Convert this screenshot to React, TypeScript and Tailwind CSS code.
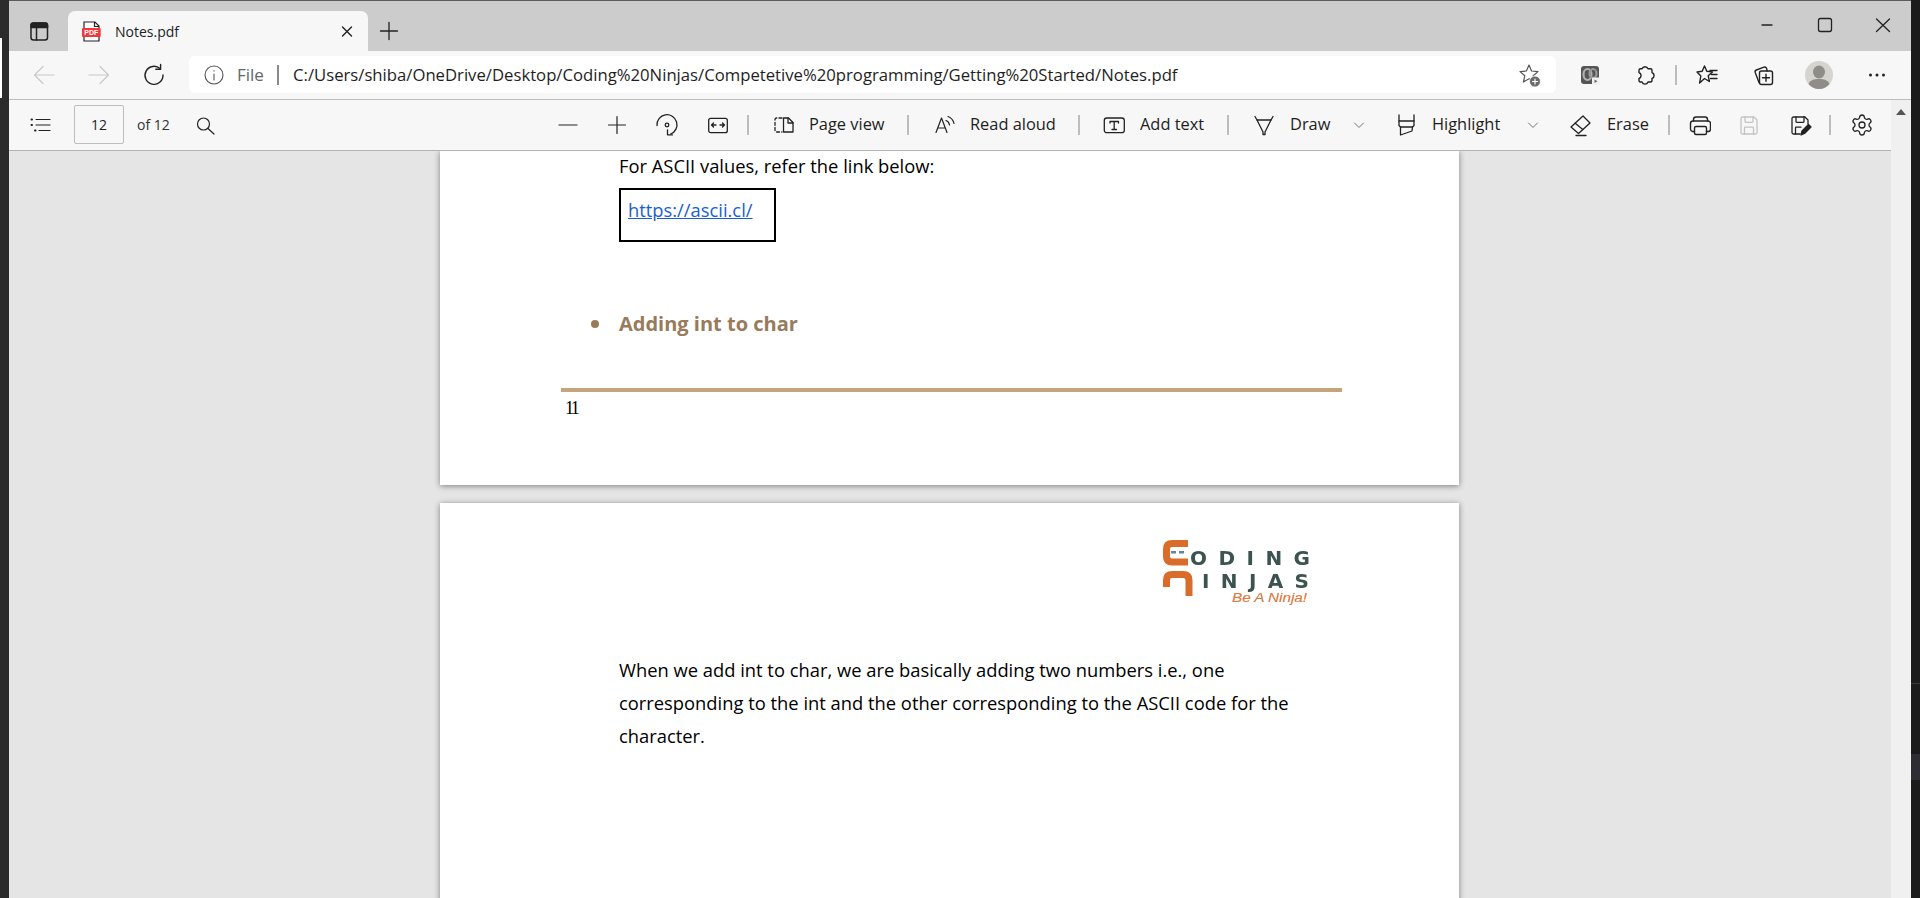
import React from "react";
import { Settings } from "lucide-react";

type IP = { children: React.ReactNode; className?: string; sw?: number; color?: string };
function I({ children, className = "", sw = 1.3, color = "#222" }: IP) {
  return (
    <svg viewBox="0 0 24 24" width="24" height="24" fill="none" stroke={color} strokeWidth={sw} strokeLinecap="round" strokeLinejoin="round" className={"shrink-0 " + className}>
      {children}
    </svg>
  );
}
const Sep = ({ className = "" }: { className?: string }) => <div className={"w-[2px] h-[20px] shrink-0 bg-[#bdbdbd] " + className} />;
const L = ({ children, className = "" }: { children: React.ReactNode; className?: string }) => (
  <span className={"shrink-0 whitespace-nowrap text-[16.4px] text-[#1e1e1e] " + className}>{children}</span>
);
const Chevron = ({ className = "" }: { className?: string }) => (
  <I className={className} color="#777" sw={1}><path d="M7.5 10 12 14.5 16.5 10" /></I>
);
const SaveShape = () => (
  <>
    <path d="M6 4h11l3 3v12.5a1.5 1.5 0 0 1-1.5 1.5h-13A1.5 1.5 0 0 1 4 19.5v-14A1.5 1.5 0 0 1 5.5 4z" />
    <path d="M8 4v4.5a.8.8 0 0 0 .8.8h6.4a.8.8 0 0 0 .8-.8V4" />
    <path d="M7.5 21v-6a.8.8 0 0 1 .8-.8h7.4a.8.8 0 0 1 .8.8v6" />
  </>
);

function Logo() {
  const f = "'Liberation Sans',sans-serif";
  const d = "'DejaVu Sans',sans-serif";
  return (
    <svg viewBox="0 0 152 70" width="152" height="70" className="blur-[0.5px]">
      <path d="M28 6.500H12Q6.500 6.500 6.500 12V19.500Q6.500 25 12 25H28" fill="none" stroke="#d96c2b" strokeWidth="7" />
      <rect x="11" y="14" width="5" height="2.500" fill="#5d8a94" />
      <rect x="19" y="14" width="5" height="2.500" fill="#5d8a94" />
      <text x="30" y="28" fontFamily={d} fontWeight="700" fontSize="20" fill="#3c5350" textLength="120" lengthAdjust="spacing">ODING</text>
      <path d="M6.500 50V43Q6.500 37.500 12 37.500H23Q29 37.500 29 43V59" fill="none" stroke="#d96c2b" strokeWidth="7" />
      <text x="42" y="51" fontFamily={d} fontWeight="700" fontSize="20" fill="#3c5350" textLength="107" lengthAdjust="spacing">INJAS</text>
      <text x="72" y="65" fontFamily={f} fontStyle="italic" fontSize="13" fill="#dd7c45" stroke="#dd7c45" strokeWidth="0.2" textLength="75" lengthAdjust="spacingAndGlyphs">Be A Ninja!</text>
    </svg>
  );
}

export default function App() {
  return (
    <div className="flex w-[1920px] h-[898px] overflow-hidden bg-[#2b2b2b] font-['Open_Sans',sans-serif]">
      {/* desktop strip left */}
      <div className="w-[9px] shrink-0 bg-[#2b2b2b] flex flex-col">
        <div className="h-[38px]" />
        <div className="w-[2px] h-[60px] bg-white" />
      </div>

      <div className="w-[1902px] shrink-0 flex flex-col">
        {/* tabs */}
        <div className="h-[51px] shrink-0 bg-[#cccccc] border-t border-[#5c5c5c] flex items-end">
          <div className="h-[40px] flex items-center ml-[18px]">
            <I sw={1.5}>
              <rect x="4" y="4" width="16.5" height="17" rx="2.5" />
              <path d="M4 8.5V6.5A2.5 2.5 0 0 1 6.5 4h11.5a2.5 2.5 0 0 1 2.5 2.5v2z" fill="#222" />
              <path d="M9.5 8.5V21" />
            </I>
          </div>
          <div className="ml-[17px] w-[300px] h-[40px] rounded-t-[7px] bg-[#f7f7f7] flex items-center pl-[12px] pr-[9px]">
            <svg viewBox="0 0 24 24" width="24" height="24" className="shrink-0">
              <path d="M4 3h11l4 4v15H4z" fill="#fff" stroke="#222" strokeWidth="1.2" />
              <path d="M14.5 3v4.5H19" fill="none" stroke="#222" strokeWidth="1.2" />
              <rect x="2" y="9" width="18.7" height="9" rx="1" fill="#f0383f" />
              <text x="11.3" y="16" textAnchor="middle" fontSize="7" fontWeight="700" fontFamily="'Liberation Sans',sans-serif" fill="#fff">PDF</text>
            </svg>
            <span className="ml-[11px] flex-1 text-[14px] text-[#1e1e1e] whitespace-nowrap">Notes.pdf</span>
            <I sw={1.4}><path d="M7.5 8 16.5 17M16.5 8 7.5 17" /></I>
          </div>
          <div className="h-[40px] flex items-center ml-[9px]">
            <I><path d="M12 3.5V20.5M3.5 12H20.5" /></I>
          </div>
          <div className="self-start mt-[12px] ml-auto pr-[16px] flex gap-[34px]">
            <I><path d="M7 12H17" /></I>
            <I><rect x="5.5" y="5.5" width="13" height="13" rx="2" /></I>
            <I><path d="M5.5 6 18.5 18.5M18.5 6 5.5 18.5" /></I>
          </div>
        </div>

        {/* address bar row */}
        <div className="h-[49px] shrink-0 bg-[#f7f7f7] border-b border-[#bdbdbd] flex items-center pb-[1px]">
          <I className="ml-[23px]" color="#c9c9c9" sw={1.2}><path d="M22 12H2.5M11 3.5 2.5 12 11 20.5" /></I>
          <I className="ml-[31px]" color="#c9c9c9" sw={1.2}><path d="M2 12H21.5M13 3.5 21.5 12 13 20.5" /></I>
          <I className="ml-[31px]" sw={1.4}>
            <path d="M18.2 5.8A9 9 0 1 0 21 12" />
            <path d="M18.6 1.5V6.2H13.8" />
          </I>
          <div className="ml-[23px] w-[1367px] h-[37px] shrink-0 bg-white rounded-[6px] flex items-center pl-[13px] pr-[14px]">
            <I color="#555" sw={1.1}>
              <circle cx="12" cy="12" r="9" />
              <path d="M12 11V17M12 7.500V8.100" />
            </I>
            <span className="ml-[11px] w-[40px] shrink-0 text-[17px] text-[#666]">File</span>
            <div className="w-[2px] h-[20px] shrink-0 bg-[#8a8a8a]" />
            <span className="ml-[14px] text-[16.7px] text-[#1e1e1e] whitespace-nowrap">C:/Users/shiba/OneDrive/Desktop/Coding%20Ninjas/Competetive%20programming/Getting%20Started/Notes.pdf</span>
            <I className="ml-auto" color="#555" sw={1.2}>
              <path d="M11 2 13.600 8 20 8.600 15.200 12.800 16.600 19 11 15.800 5.400 19 6.800 12.800 2 8.600 8.400 8z" />
              <circle cx="17" cy="18.500" r="5.500" fill="#6b6b6b" stroke="#fff" strokeWidth="0.8" />
              <path d="M17 16V21M14.500 18.500H19.500" stroke="#fff" />
            </I>
          </div>
          <svg viewBox="0 0 24 24" width="24" height="24" className="ml-[22px] shrink-0">
            <rect x="3" y="3" width="18" height="18" rx="3" fill="#555" />
            <ellipse cx="9.500" cy="11.500" rx="4" ry="5.500" fill="none" stroke="#b0b0b0" strokeWidth="2.200" />
            <ellipse cx="15" cy="10.500" rx="3.500" ry="4.500" fill="none" stroke="#999" strokeWidth="2.200" />
            <rect x="14" y="14.500" width="8" height="7.500" rx="1" fill="#f2f2f2" />
            <path d="M16.500 16.500 19.500 18.200 16.500 20z" fill="#666" />
          </svg>
          <I className="ml-[31px]" sw={1.4}>
            <path d="M9 5.800a3.200 3.200 0 0 1 6 0h2.500a1.500 1.500 0 0 1 1.500 1.500V9.500a3.200 3.200 0 0 1 0 6v2a1.500 1.500 0 0 1-1.500 1.500H15a3.200 3.200 0 0 1-6 0H7.500A1.500 1.500 0 0 1 6 17.500v-2a3.200 3.200 0 0 0 0-6V7.300A1.500 1.500 0 0 1 7.500 5.800z" />
          </I>
          <Sep className="ml-[18px]" />
          <I className="ml-[18px]" sw={1.4}>
            <path d="M9.500 3 11.800 8.300 17.500 8.900 13.200 12.700 14.400 18.500 9.500 15.500 4.600 20 5.800 13 2 9 7.200 8.300z" />
            <path d="M15 7.500H22M16.500 11.500H22M15.500 15.500H22" />
          </I>
          <I className="ml-[32px]" sw={1.4}>
            <path d="M8 19.5 4.2 9.5A2 2 0 0 1 5.4 7L13 4.2A2 2 0 0 1 15.6 5.4L16.2 8" />
            <rect x="8.5" y="8" width="13" height="13.5" rx="2" />
            <path d="M15 11.2V18.2M11.5 14.8H18.5" />
          </I>
          <svg viewBox="0 0 28 28" width="28" height="28" className="ml-[30px] shrink-0">
            <circle cx="14" cy="14" r="14" fill="#d6d4cf" />
            <ellipse cx="14" cy="11" rx="6" ry="6.5" fill="#8f8d88" />
            <path d="M3.5 23C5 19 9 18 14 18S23 19 24.5 23A14 14 0 0 1 14 28 14 14 0 0 1 3.5 23z" fill="#8f8d88" />
          </svg>
          <svg viewBox="0 0 24 24" width="24" height="24" className="ml-[32px] shrink-0" fill="#222">
            <circle cx="5.500" cy="12" r="1.500" /><circle cx="12" cy="12" r="1.500" /><circle cx="18.500" cy="12" r="1.500" />
          </svg>
        </div>

        {/* pdf viewer */}
        <div className="flex-1 min-h-0 flex">
          <div className="w-[1882px] shrink-0 flex flex-col min-h-0">
            <div className="h-[51px] shrink-0 bg-[#f7f7f7] border-b border-[#b3b3b3] flex items-center pb-[1px]">
              <I className="ml-[19px]" sw={1.2}>
                <path d="M8 6.5H22M8 12H22M11 17.5H22" />
                <path d="M3.5 6.5H4M3.5 12H4M7 17.5H7.5" strokeWidth="2" />
              </I>
              <div className="ml-[22px] w-[50px] h-[39px] shrink-0 rounded-[2px] border border-[#bdbdbd] flex items-center justify-center">
                <span className="text-[14px] text-[#1e1e1e]">12</span>
              </div>
              <span className="ml-[13px] w-[40px] shrink-0 text-[14px] text-[#333] whitespace-nowrap">of 12</span>
              <I className="ml-[16px]" sw={1.2}>
                <circle cx="10.5" cy="11" r="6" />
                <path d="M15 15.5 21 21" />
              </I>
              <I className="ml-[339px]" sw={1.2}><path d="M3 12H21" /></I>
              <I className="ml-[25px]" sw={1.2}><path d="M12 3.5V20.5M3.5 12H20.5" /></I>
              <I className="ml-[26px]" sw={1.3}>
                <path d="M2 12.5A10 10 0 1 1 15.7 21" />
                <circle cx="12" cy="12" r="1.8" />
                <path d="M12.5 17V21.8H17.5" />
              </I>
              <I className="ml-[27px]" sw={1.3}>
                <rect x="2.7" y="5.3" width="18.6" height="14.4" rx="2" />
                <path d="M5.5 12H10M7.5 10 5.5 12 7.5 14M14 12H18.5M16.5 10 18.5 12 16.5 14" />
              </I>
              <Sep className="ml-[17px]" />
              <I className="ml-[23px]" sw={1.3}>
                <path d="M10 5H4.5A1.5 1.5 0 0 0 3 6.5V17.5A1.5 1.5 0 0 0 4.500 19H10" strokeDasharray="3 2.2" />
                <path d="M11.500 5H16.500L21 9.500V19H11.500z" />
                <path d="M16 5V10H21" />
              </I>
              <L className="ml-[13px] w-[77px]">Page view</L>
              <Sep className="ml-[21px]" />
              <I className="ml-[23px]" sw={1.2}>
                <path d="M4 19.5 9.500 5 15 19.500M6 15H13" />
                <path d="M14 7.500Q17 8.500 17.500 12M16 3.500Q21 5.500 22 10.500" />
              </I>
              <L className="ml-[14px] w-[85px]">Read aloud</L>
              <Sep className="ml-[23px]" />
              <I className="ml-[22px]" sw={1.3}>
                <rect x="2.300" y="5" width="20" height="14.700" rx="2.500" />
                <path d="M8 10V8.500H16.500V10M12.200 8.500V16.500M10 16.500H14.500" />
              </I>
              <L className="ml-[14px] w-[65px]">Add text</L>
              <Sep className="ml-[22px]" />
              <I className="ml-[23px]" sw={1.3}>
                <path d="M3 3.500 5 7H19L21 3.500" />
                <path d="M5 7 11 19V21.500H13V19L19 7" />
              </I>
              <L className="ml-[14px] w-[39px]">Draw</L>
              <Chevron className="ml-[18px]" />
              <I className="ml-[23px]" sw={1.3}>
                <path d="M5 2V8H20V2" />
                <path d="M5 8V12.500L6.500 14H18.500L20 12.500V8" />
                <path d="M6.500 14V22L18 18 18.500 14" />
              </I>
              <L className="ml-[14px] w-[71px]">Highlight</L>
              <Chevron className="ml-[18px]" />
              <I className="ml-[23px]" sw={1.3}>
                <path d="M3 14 15 3 22 10 10.500 20.500z" />
                <path d="M7.200 10.200 14.800 16.500" />
                <path d="M8 22.500H18" />
              </I>
              <L className="ml-[15px] w-[39px]">Erase</L>
              <Sep className="ml-[22px]" />
              <I className="ml-[17px]" sw={1.4}>
                <path d="M6.500 8V6.500A2.500 2.500 0 0 1 9 4H18A2.500 2.500 0 0 1 20.500 6.500V8" />
                <path d="M7.500 18.500H5.500A2.500 2.500 0 0 1 3.500 16V10.500A2.500 2.500 0 0 1 6 8H21A2.500 2.500 0 0 1 23.500 10.500V16A2.500 2.500 0 0 1 21.500 18.500H19.500" />
                <rect x="7.500" y="13.500" width="12" height="8" rx="1.500" />
              </I>
              <I className="ml-[26px]" color="#c4c4c4" sw={1.3}><SaveShape /></I>
              <I className="ml-[27px]" sw={1.3}>
                <path d="M20 11V7L17 4H5.500A1.500 1.500 0 0 0 4 5.500V19.500A1.500 1.500 0 0 0 5.500 21H12" />
                <path d="M8 4V8.500A.8.8 0 0 0 8.800 9.300H15.200A.8.8 0 0 0 16 8.500V4" />
                <path d="M7.500 21V15A.8.8 0 0 1 8.300 14.200H13" />
                <path d="M13 22 14 18 20.500 11.500 23 14 16.500 20.500z" fill="#222" />
              </I>
              <Sep className="ml-[17px]" />
              <Settings size={24} strokeWidth={1.3} color="#222" className="ml-[19px] shrink-0" />
            </div>

            <div className="flex-1 min-h-0 bg-[#e5e5e5] overflow-hidden flex flex-col">
              {/* page 11 */}
              <div className="ml-[431px] w-[1019px] h-[334px] shrink-0 bg-white shadow-[0_1px_6px_rgba(0,0,0,0.45)] flex flex-col text-black">
                <p className="ml-[179px] h-[30px] leading-[30px] text-[18.35px] whitespace-nowrap">For ASCII values, refer the link below:</p>
                <div className="ml-[179px] mt-[7px] w-[157px] h-[54px] border-2 border-black pl-[7px] pt-[5px]">
                  <a className="text-[18.35px] leading-[30px] text-[#1a5fd0] underline whitespace-nowrap">https://ascii.cl/</a>
                </div>
                <div className="mt-[67px] h-[30px] flex items-center ml-[151px]">
                  <span className="w-[8px] h-[8px] rounded-full bg-[#987b5b]" />
                  <span className="ml-[20px] text-[20px] font-bold text-[#987b5b] whitespace-nowrap">Adding int to char</span>
                </div>
                <div className="mt-[49px] ml-[121px] w-[781px] h-[4px] shrink-0 bg-[#c6a57c]" />
                <span className="mt-[4px] ml-[125px] h-[24px] leading-[24px] text-[18px] tracking-[-2.5px] font-['Liberation_Serif',serif]">11</span>
              </div>
              {/* page 12 */}
              <div className="ml-[431px] mt-[18px] w-[1019px] flex-1 min-h-[400px] shrink-0 bg-white shadow-[0_1px_6px_rgba(0,0,0,0.45)] flex flex-col text-black">
                <div className="mt-[34px] ml-[720px] w-[152px] h-[70px]"><Logo /></div>
                <div className="mt-[46px] ml-[179px] text-[18.35px] leading-[33.2px] whitespace-nowrap">
                  <p>When we add int to char, we are basically adding two numbers i.e., one</p>
                  <p>corresponding to the int and the other corresponding to the ASCII code for the</p>
                  <p>character.</p>
                </div>
              </div>
            </div>
          </div>

          {/* scrollbar */}
          <div className="w-[20px] shrink-0 bg-[#f0f0f0] flex flex-col items-center pt-[9px]">
            <svg viewBox="0 0 10 6" width="10" height="6"><path d="M5 0 10 6H0z" fill="#555" /></svg>
          </div>
        </div>
      </div>

      {/* desktop strip right */}
      <div className="w-[9px] shrink-0 bg-[#1b1b1b] flex flex-col">
        <div className="h-[683px]" />
        <div className="h-[1px] bg-[#3a3a3a]" />
        <div className="h-[70px]" />
        <div className="h-[26px] bg-[#2d2d33]" />
      </div>
    </div>
  );
}
